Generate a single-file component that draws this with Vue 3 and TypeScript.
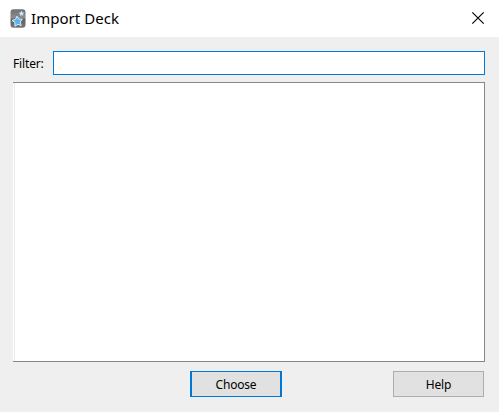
<script setup lang="ts">
import { ref } from 'vue'

const filter = ref('')
</script>

<template>
  <main class="dialog">
    <header class="titlebar">
      <svg class="logo" width="16" height="20" viewBox="0 0 16 20">
        <defs>
          <linearGradient id="slate" x1="0" y1="0" x2="0" y2="1">
            <stop offset="0" stop-color="#707070" />
            <stop offset=".45" stop-color="#8c8c8c" />
            <stop offset=".55" stop-color="#606060" />
            <stop offset="1" stop-color="#777" />
          </linearGradient>
        </defs>
        <rect x=".5" y=".2" width="15" height="18.6" rx="3" fill="url(#slate)" />
        <path d="M7 7.2l1.7 2.9 3.6.1-2.1 2.8 1 3.5-3.3-1.2-3 2 .1-3.7L2 11.4l3.5-1z" fill="#58b4ee" stroke="#d8efff" stroke-width="1" stroke-linejoin="round" />
        <path d="M11.4 1.8l.9 1.6 1.9.1-1.2 1.4.5 1.9-1.8-.7-1.6 1.1.1-2-1.6-1.1 1.9-.5z" fill="#c8e8fb" />
      </svg>
      <h1 class="title">Import Deck</h1>
      <button class="close" aria-label="Close">
        <svg width="14" height="14" viewBox="0 0 14 14">
          <path d="M1.3 1.3l11.4 11.4M12.7 1.3L1.3 12.7" stroke="#000" stroke-width="1.15" />
        </svg>
      </button>
    </header>
    <section class="content">
      <div class="filter-row">
        <label class="label" for="filter">Filter:</label>
        <input id="filter" v-model="filter" class="field" type="text" />
      </div>
      <div class="list"></div>
      <footer class="actions">
        <button class="btn primary">Choose</button>
        <button class="btn">Help</button>
      </footer>
    </section>
  </main>
</template>

<style>
body {
  margin: 0;
  background: #efefef;
}
</style>

<style scoped>
.dialog {
  width: 499px;
  height: 412px;
  overflow: hidden;
  background: #efefef;
  color: #000;
  font-family: "Noto Sans", "Open Sans", sans-serif;
}
.titlebar {
  display: flex;
  align-items: center;
  box-sizing: border-box;
  height: 37px;
  padding: 0 14px 0 10px;
  background: #fff;
}
.logo {
  flex: none;
}
.title {
  margin: 0 auto 0 5px;
  padding-bottom: 2px;
  font-size: 15px;
  font-weight: 400;
  line-height: 20px;
  letter-spacing: 0.05px;
  white-space: nowrap;
}
.close {
  display: flex;
  margin-bottom: 1px;
  padding: 0;
  border: 0;
  background: none;
}
.content {
  display: flex;
  flex-direction: column;
  padding: 14px 14px 0 13px;
}
.filter-row {
  display: flex;
  align-items: center;
  height: 24px;
}
.label {
  width: 40px;
  padding-top: 2px;
  font-size: 12px;
  line-height: 16px;
  letter-spacing: -0.15px;
  white-space: nowrap;
}
.field {
  flex: 1;
  box-sizing: border-box;
  height: 24px;
  min-width: 0;
  padding: 0 4px;
  border: 1px solid #0078d7;
  border-radius: 0;
  outline: none;
  background: #fff;
  font: inherit;
  font-size: 12px;
}
.list {
  box-sizing: border-box;
  height: 280px;
  margin-top: 7px;
  border: solid #828790;
  border-width: 1px 1px 1px 0;
  background: #fff;
  box-shadow: inset 1px 0 #fff, inset 2px 0 #e9e9e9;
}
.actions {
  display: flex;
  justify-content: flex-end;
  gap: 111px;
  margin: 9px 1px 0 0;
}
.btn {
  box-sizing: border-box;
  width: 91px;
  height: 26px;
  padding: 2px 0 0;
  border: 1px solid #adadad;
  border-radius: 0;
  background: #e1e1e1;
  color: #000;
  font-family: inherit;
  font-size: 12px;
  line-height: 16px;
  letter-spacing: -0.2px;
}
.primary {
  width: 92px;
  border: solid #0078d7;
  border-width: 1px 2px;
}
</style>
